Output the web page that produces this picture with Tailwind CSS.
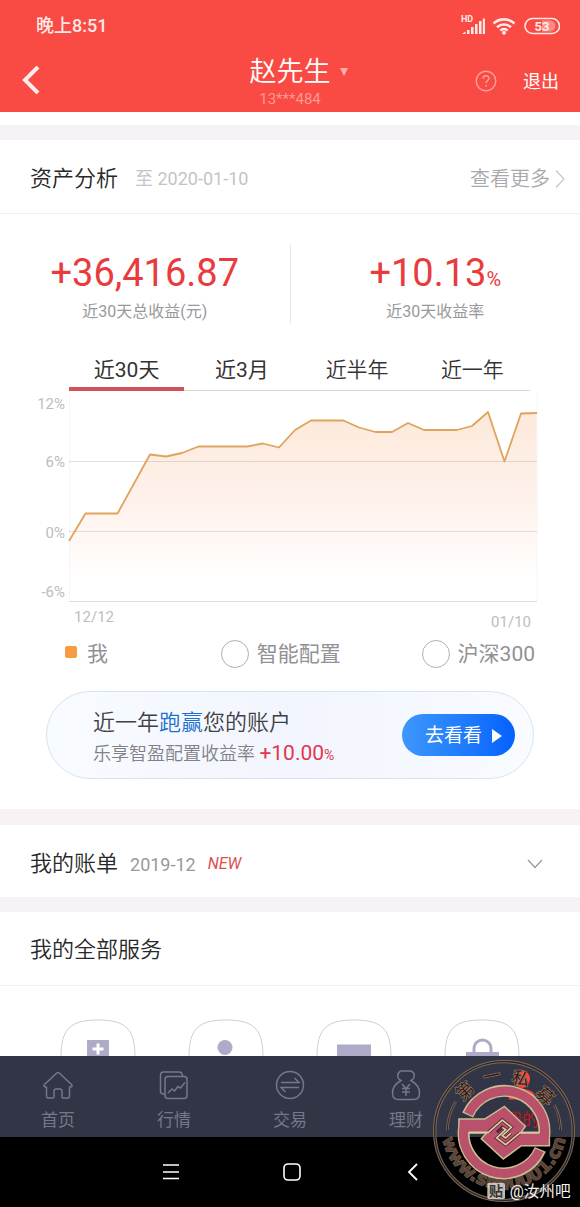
<!DOCTYPE html>
<html lang="zh-CN">
<head>
  <meta charset="UTF-8" />
  <meta name="viewport" content="width=device-width,initial-scale=1.0" />
  <title>资产分析</title>
  <script src="https://cdn.jsdelivr.net/npm/@tailwindcss/browser@4"></script>
</head>
<body class="relative flex flex-col h-screen overflow-hidden bg-white text-[#333] font-['Roboto','Noto_Sans_CJK_SC',sans-serif]">
  <!-- Header -->
  <header class="bg-[#f94a43] text-white shrink-0">
    <div class="flex items-center justify-between h-[50px] pt-[2px] pl-9 pr-5">
      <span class="text-[18px] leading-6 font-medium text-[#ffe9e7]">晚上8:51</span>
      <svg class="w-[100px] h-6" viewBox="0 0 100 24" fill="#ffe9e7">
        <text x="1" y="8" font-size="9" font-weight="700">HD</text>
        <path d="M2 20 L5.500 17.500 V20Z M7 16h2.500v4H7z M11 13h2.500v7H11z M15 10h2.500v10H15z M19 7h2.500v13h-2.500z M22.800 4.500h2.200V20h-2.200z" />
        <g fill="none" stroke="#ffe9e7" stroke-width="2.600">
          <path d="M33.500 9.500a15.500 15.500 0 0 1 21 0" />
          <path d="M37 13.200a10.500 10.500 0 0 1 14 0" />
          <path d="M40.300 16.600a5.500 5.500 0 0 1 7.400 0" />
        </g>
        <circle cx="44" cy="18.800" r="2" />
        <rect x="65" y="4.500" width="34.500" height="15" rx="7.500" fill="none" stroke="#ffe9e7" stroke-width="1.600" />
        <path d="M82 6.500h8a5.500 5.500 0 0 1 0 11h-8z" fill="#fc8a85" />
        <text x="82" y="16.500" font-size="13" font-weight="700" text-anchor="middle">53</text>
      </svg>
    </div>
    <div class="grid grid-cols-[1fr_auto_1fr] h-[62px]">
      <button class="justify-self-start self-start pl-[21px] pt-[15px]" aria-label="返回">
        <svg class="w-5 h-[30px]" viewBox="0 0 20 30" fill="none" stroke="#ffe9ee" stroke-width="4"><path d="M17 2 L4 15 L17 28" /></svg>
      </button>
      <div class="flex flex-col items-center pt-[5px]">
        <button class="flex items-center gap-2 pl-[18px]">
          <span class="text-[27px] leading-[34px] font-[350]">赵先生</span>
          <svg class="w-[10px] h-[10px]" viewBox="0 0 10 10" fill="#ffb0ad"><path d="M1 1h8L5 9z" /></svg>
        </button>
        <span class="text-[15px] leading-5 text-[#fd9a96]">13***484</span>
      </div>
      <div class="flex items-center justify-end gap-[26px] h-[62px] pr-[21px]">
        <button aria-label="帮助">
          <svg class="w-[22px] h-[22px]" viewBox="0 0 22 22" fill="none" stroke="#fda09c" stroke-width="1.400">
            <circle cx="11" cy="11" r="9.800" />
            <path d="M8 8.800c0-4 6-4 6-.5 0 2.200-3 2.400-3 5" /><path d="M11 15v1.700" />
          </svg>
        </button>
        <button class="pt-[2px] text-[18px] leading-6">退出</button>
      </div>
    </div>
  </header>

  <main class="flex-1 min-h-0 overflow-hidden">
    <!-- Assets -->
    <section class="border-t-[15px] border-[#f6f2f6] mt-[13px]">
      <div class="flex items-center h-[74px] pt-[5px] pl-[30px] pr-[14px] border-b border-[#efeff2]">
        <h2 class="text-[22px] leading-8 font-[350] text-[#282828]">资产分析</h2>
        <span class="ml-[17px] text-[18px] leading-6 text-[#c3c3c8]">至 2020-01-10</span>
        <a href="#" class="ml-auto flex items-center gap-1 text-[20px] leading-6 font-[350] text-[#a8a8ae]">查看更多
          <svg class="w-3 h-5" viewBox="0 0 12 20" fill="none" stroke="#c8c8cc" stroke-width="1.300"><path d="M2 1.500 L10 10 L2 18.500" /></svg>
        </a>
      </div>

      <div class="flex mt-[30px] h-20 text-center">
        <div class="flex-1 border-r border-[#e8e8ec]">
          <p class="mt-1 h-[52px] text-[38px] leading-[50px] text-[#e93b3d]">+36,416.87</p>
          <p class="text-[16px] leading-6 text-[#99999d]">近30天总收益(元)</p>
        </div>
        <div class="flex-1">
          <p class="mt-1 h-[52px] text-[38px] leading-[50px] text-[#e93b3d]">+10.13<span class="text-[20px] leading-none">%</span></p>
          <p class="text-[16px] leading-6 text-[#99999d]">近30天收益率</p>
        </div>
      </div>

      <div class="grid grid-cols-4 mt-[21px] ml-[69px] mr-[50px] h-[46px] pt-[2px] text-[21px] leading-[46px] shadow-[inset_0_-1px_#d9d9dc]">
        <button class="h-11 shadow-[inset_0_-4px_#d05558]">近30天</button>
        <button class="h-11">近3月</button>
        <button class="h-11 font-[350]">近半年</button>
        <button class="h-11 font-[350]">近一年</button>
      </div>

      <!-- Chart -->
      <svg class="block w-full" viewBox="0 391 580 243">
        <defs>
          <linearGradient id="area" x1="0" y1="412" x2="0" y2="580" gradientUnits="userSpaceOnUse">
            <stop offset="0" stop-color="#fce9da" />
            <stop offset="0.500" stop-color="#fef1ea" />
            <stop offset="1" stop-color="#ffffff" />
          </linearGradient>
        </defs>
        <path fill="url(#area)" d="M69 541 L85.500 513.500 H117.500 L150 454.500 L166 456.500 L182 453 L198.500 446.500 H247 L263 443.500 L279 447.500 L295 430 L311 420.500 H343.500 L359 427.500 L375.500 432 H392 L408 423 L424 430 H457 L472 426 L488 412 L504.500 461.500 L521 413.500 L537 413 V601 H69Z" />
        <path d="M69.500 391V601 M537 391V601" stroke="#f6f6f8" />
        <path d="M69 461.500H537 M69 531.500H537" stroke="#b09090" stroke-opacity="0.300" />
        <path d="M69 601.500H537" stroke="#dededf" />
        <path fill="none" stroke="#dfa35c" stroke-width="1.800" stroke-linejoin="round" d="M69 541 L85.500 513.500 H117.500 L150 454.500 L166 456.500 L182 453 L198.500 446.500 H247 L263 443.500 L279 447.500 L295 430 L311 420.500 H343.500 L359 427.500 L375.500 432 H392 L408 423 L424 430 H457 L472 426 L488 412 L504.500 461.500 L521 413.500 L537 413" />
        <g font-size="15" fill="#bcbcc2" text-anchor="end">
          <text x="65" y="409">12%</text>
          <text x="65" y="467">6%</text>
          <text x="65" y="538">0%</text>
          <text x="65" y="597">-6%</text>
          <text x="114" y="622">12/12</text>
          <text x="531" y="627">01/10</text>
        </g>
      </svg>

      <div class="grid grid-cols-[156fr_201fr_113fr] h-10 ml-[65px] mr-[45px] text-[21px] leading-8 text-[#919196] whitespace-nowrap">
        <label class="flex items-center gap-[10px]"><input type="checkbox" checked class="appearance-none w-3 h-3 mb-1 rounded-xs bg-[#f99a45]">我</label>
        <label class="flex items-center gap-2"><input type="checkbox" class="appearance-none w-7 h-7 rounded-full border border-[#b0b0b4]">智能配置</label>
        <label class="flex items-center gap-2"><input type="checkbox" class="appearance-none w-7 h-7 rounded-full border border-[#b0b0b4]">沪深300</label>
      </div>

      <!-- Banner -->
      <div class="flex items-center justify-between mx-[46px] mt-[17px] mb-[30px] h-[88px] pl-[46px] pr-[18px] rounded-full border border-[#d5e5f0] bg-linear-to-r from-[#f8fbff] via-[#f3f5fe] to-[#f8fbff]">
        <div class="pt-[6px]">
          <p class="text-[22px] leading-8 font-[350] text-[#404044]">近一年<span class="text-[#1c70cf]">跑赢</span>您的账户</p>
          <p class="h-[30px] text-[18px] leading-[30px] font-[350] text-[#808086]">乐享智盈配置收益率 <span class="text-[21px] leading-none font-normal text-[#e0384b]">+10.00</span><span class="text-[14px] leading-none font-normal text-[#e0384b]">%</span></p>
        </div>
        <button class="flex items-center justify-center gap-[10px] w-[113px] h-[42px] pl-[10px] pt-[1px] rounded-full bg-linear-to-r from-[#3d97fb] to-[#0561fd] text-[19px] leading-6 text-white">去看看
          <svg class="w-[10px] h-[14px]" viewBox="0 0 10 14" fill="#fff"><path d="M0 0 L10 7 L0 14z" /></svg>
        </button>
      </div>
    </section>

    <!-- Bill -->
    <section class="flex items-center h-[88px] pt-[5px] pl-[30px] pr-[37px] border-t-[16px] border-[#f6f2f6]">
      <h2 class="text-[22px] leading-8 font-[350] text-[#282828]">我的账单</h2>
      <span class="ml-3 pt-[2px] text-[18px] leading-6 text-[#9898a0]">2019-12</span>
      <span class="ml-3 text-[16px] leading-6 italic text-[#dc5050]">NEW</span>
      <button class="ml-auto" aria-label="展开">
        <svg class="w-4 h-[10px]" viewBox="0 0 16 10" fill="none" stroke="#9a9a9e" stroke-width="1.300"><path d="M1 1 L8 8.500 L15 1" /></svg>
      </button>
    </section>

    <!-- Services -->
    <section class="border-t-[15px] border-[#f6f2f6]">
      <div class="flex items-center h-[74px] pt-[2px] pl-[30px] border-b border-[#f2f2f4]">
        <h2 class="text-[22px] leading-8 font-[350] text-[#282828]">我的全部服务</h2>
      </div>
      <div class="flex justify-between px-[60px] pt-[33px]">
        <svg class="w-[76px] h-[76px]" viewBox="0 0 76 76"><path d="M38 1 C66 1 75 10 75 38 S66 75 38 75 S1 66 1 38 S10 1 38 1z" fill="none" stroke="#cfcfdb" /><path d="M27 21h22v34H27z" fill="#aeabc8" /><path d="M38 24.500v11 M32.500 30h11" stroke="#fff" stroke-width="3" /></svg>
        <svg class="w-[76px] h-[76px]" viewBox="0 0 76 76"><path d="M38 1 C66 1 75 10 75 38 S66 75 38 75 S1 66 1 38 S10 1 38 1z" fill="none" stroke="#cfcfdb" /><circle cx="37" cy="28.500" r="7.500" fill="#aeabc8" /></svg>
        <svg class="w-[76px] h-[76px]" viewBox="0 0 76 76"><path d="M38 1 C66 1 75 10 75 38 S66 75 38 75 S1 66 1 38 S10 1 38 1z" fill="none" stroke="#cfcfdb" /><path d="M21 25.500h34v24H21z" fill="#aeabc8" /></svg>
        <svg class="w-[76px] h-[76px]" viewBox="0 0 76 76"><path d="M38 1 C66 1 75 10 75 38 S66 75 38 75 S1 66 1 38 S10 1 38 1z" fill="none" stroke="#cfcfdb" /><path d="M30 34v-4c0-12 17-12 17 0v4" fill="none" stroke="#aeabc8" stroke-width="3" /><path d="M22 33h33v22H22z" fill="#aeabc8" /></svg>
      </div>
    </section>
  </main>

  <!-- Tab bar -->
  <nav class="grid grid-cols-5 h-[81px] shrink-0 pt-[14px] bg-[#323545] text-[17px] leading-6 text-[#74788a]">
    <a href="#" class="flex flex-col items-center gap-[6px]">
      <svg class="w-8 h-8" viewBox="0 0 32 32" fill="none" stroke="currentColor" stroke-width="1.500" stroke-linejoin="round"><path d="M14.500 3.200 Q16 1.800 17.500 3.200 L29.500 14.500 Q31 16.500 28.500 17 H27.500 V26.500 Q27.500 28 26 28 H21 Q20 28 20 26.500 V21 Q20 19 18 19 H14 Q12 19 12 21 V26.500 Q12 28 11 28 H6 Q4.500 28 4.500 26.500 V17 H3.500 Q1 16.500 2.500 14.500z" /></svg>
      首页
    </a>
    <a href="#" class="flex flex-col items-center gap-[6px]">
      <svg class="w-8 h-8" viewBox="0 0 32 32" fill="none" stroke="currentColor" stroke-width="1.500"><path d="M7 24H5.500Q2.500 24 2.500 21V5Q2.500 2 5.500 2H21Q24.500 2 24.500 6.500" /><rect x="7" y="6.500" width="22" height="22" rx="3" /><path d="M10 23 L14 19 L16.500 21 L20 16.500 L22.500 18 L27 12.500" /></svg>
      行情
    </a>
    <a href="#" class="flex flex-col items-center gap-[6px]">
      <svg class="w-8 h-8" viewBox="0 0 32 32" fill="none" stroke="currentColor" stroke-width="1.500"><circle cx="16" cy="15" r="13.500" /><path d="M7 12.500H25L20.500 8 M25 17.500H7L11.500 22" /></svg>
      交易
    </a>
    <a href="#" class="flex flex-col items-center gap-[6px]">
      <svg class="w-8 h-8" viewBox="0 0 32 32" fill="none" stroke="currentColor" stroke-width="1.500"><path d="M11 10.500C6 8 7.500 2 11 1H21C24.500 2 26 8 21 10.500C27 14 30 19 29.500 24Q29 29.500 24 29.500H8Q3 29.500 2.500 24C2 19 5 14 11 10.500z" /><path d="M12 14 L16 18.500 L20 14 M16 18.500V26 M12 18.500H20 M12 22H20" /></svg>
      理财
    </a>
    <a href="#" class="flex flex-col items-center gap-[6px] text-[#c3171d]">
      <svg class="w-8 h-8" viewBox="0 0 32 32" fill="#ff4338"><ellipse cx="16" cy="9" rx="8" ry="9" /><path d="M3 29.500V24C4 20 12 20 16 18C20 20 28 20 29 26V29.500z" /></svg>
      我的
    </a>
  </nav>

  <!-- System keys -->
  <div class="flex justify-center items-center h-[70px] shrink-0 pl-1 bg-black">
    <button class="flex justify-center w-[121px]" aria-label="菜单"><svg class="w-5 h-5" viewBox="0 0 20 20" stroke="#fff" stroke-width="1.600"><path d="M2 3h16 M2 10h16 M2 16.500h16" /></svg></button>
    <button class="flex justify-center w-[121px]" aria-label="主页"><svg class="w-5 h-5" viewBox="0 0 20 20" fill="none" stroke="#fff" stroke-width="1.600"><rect x="2" y="2" width="16" height="16" rx="4" /></svg></button>
    <button class="flex justify-center w-[121px]" aria-label="返回上一页"><svg class="w-5 h-5" viewBox="0 0 20 20" fill="none" stroke="#fff" stroke-width="1.800"><path d="M14 2 L6 10 L14 18" /></svg></button>
  </div>

  <!-- Watermark -->
  <svg class="absolute right-0 bottom-0 w-[155px] h-[157px] pointer-events-none" viewBox="0 0 465 471">
    <defs>
      <path id="rim" d="M49 230 A188 188 0 1 0 425 230" />
    </defs>
    <g fill="none">
      <circle cx="237" cy="243" r="208" stroke="#766c5f" stroke-width="10" />
      <circle cx="237" cy="243" r="208" stroke="#38211c" stroke-width="4" />
      <path d="M67 240A170 170 0 0 1 92 155 M388 165A170 170 0 0 1 407 240" stroke="#766c5f" stroke-width="8" />
      <path d="M67 240A170 170 0 0 1 92 155 M388 165A170 170 0 0 1 407 240" stroke="#38211c" stroke-width="3" />
    </g>
    <g fill="#3b1714" stroke="#8a7c69" stroke-width="4" paint-order="stroke" font-size="52" text-anchor="middle">
      <text transform="translate(120 123) rotate(-42)" y="18">第</text>
      <text transform="translate(200 78) rotate(-12)" y="18">一</text>
      <text transform="translate(287 86) rotate(12)" y="18">私</text>
      <text transform="translate(360 138) rotate(42)" y="18">募</text>
    </g>
    <text fill="#5b4339" stroke="#756653" stroke-width="3" paint-order="stroke" font-family="DejaVu Sans" font-size="54" font-weight="700" text-anchor="middle"><textPath href="#rim" startOffset="50%">www.simu001.cn</textPath></text>
    <!-- ring halves, then the bars and the diamond -->
    <g fill="none" stroke="#c9bd94" stroke-width="36">
      <path d="M128 195 A120 120 0 0 1 356 265" />
      <path d="M346 298 A120 120 0 0 1 118 228" />
    </g>
    <path d="M104 209H180L238 172L298 229L284 249H371V285H288L235 324L172 266L190 247H104z" fill="#b9516b" stroke="#c9bd94" stroke-width="9" />
    <g fill="none" stroke="#b9516b" stroke-width="27">
      <path d="M130 192 A120 120 0 0 1 356 268" />
      <path d="M344 301 A120 120 0 0 1 118 225" />
    </g>
    <path d="M104 209H180L238 172L298 229L284 249H371V285H288L235 324L172 266L190 247H104z" fill="#b9516b" />
    <g fill="none">
      <path d="M190 247 L232 210 L259 232 L232 257 L242 264 L258 249 M284 249 L242 284 L215 264 L242 239 L232 232 L216 247" stroke="#5a2737" stroke-width="10" />
      <path d="M131 247H190 L232 210 L259 232 L232 257 L242 264 L258 249 M343 249H284 L242 284 L215 264 L242 239 L232 232" stroke="#d9cda0" stroke-width="5" />
    </g>
    <rect x="187" y="398" width="53" height="50" rx="6" fill="#dcdcd6" fill-opacity="0.850" />
    <text x="213" y="438" font-size="42" font-weight="700" fill="#3a3230" text-anchor="middle">贴</text>
    <text x="254" y="440" font-size="47" fill="#f4f4f2">@汝州吧</text>
  </svg>
</body>
</html>
